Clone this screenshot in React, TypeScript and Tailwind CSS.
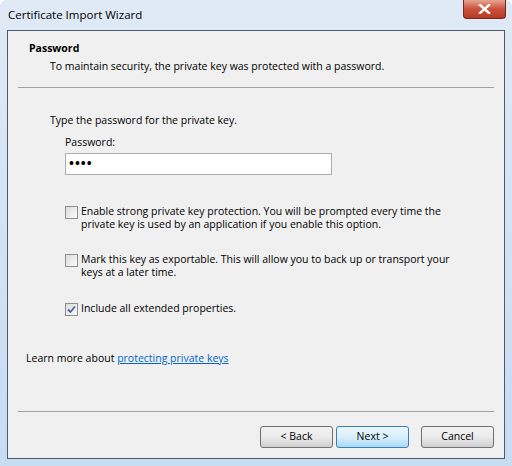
import { FunctionComponent } from 'react';

const font = { fontFamily: '"Open Sans", "Noto Sans", sans-serif' };

const Checkbox: FunctionComponent<{ checked?: boolean }> = ({ checked }) => (
  <span className="mt-[1px] flex h-[13px] w-[13px] shrink-0 items-center justify-center border border-[#8e8f8f] bg-gradient-to-br from-[#dcdcdc] to-[#fbfbfb]">
    {checked && (
      <svg width="9" height="9" viewBox="0 0 9 9" aria-hidden="true">
        <path d="M1 4.5 L3.5 7 L8 1.5" fill="none" stroke="#4a64a0" strokeWidth="1.8" />
      </svg>
    )}
  </span>
);

const Option: FunctionComponent<{ checked?: boolean; lines: string[] }> = ({ checked, lines }) => (
  <div className="flex items-start gap-[3px] pl-[15px]">
    <Checkbox checked={checked} />
    <div className="leading-[13px]">
      {lines.map((l) => (
        <div key={l}>{l}</div>
      ))}
    </div>
  </div>
);

const Button: FunctionComponent<{ label: string; active?: boolean }> = ({ label, active }) => (
  <button
    className={
      active
        ? 'h-[22px] w-[73px] rounded-[3px] border border-[#3c7fb1] bg-gradient-to-b from-[#eaf6fd] via-[#d9f0fc] to-[#a7d9f5] text-[10.5px] text-black'
        : 'h-[22px] w-[73px] rounded-[3px] border border-[#707070] bg-gradient-to-b from-[#f2f2f2] via-[#ebebeb] to-[#cfcfcf] text-[10.5px] text-black'
    }
  >
    {label}
  </button>
);

export default function App() {
  return (
    <div
      className="flex h-[466px] w-[512px] flex-col rounded-t-[6px] bg-gradient-to-b from-[#dfeaf5] to-[#c6dcf1] text-[10.5px] text-black"
      style={font}
    >
      <div className="flex h-[30px] shrink-0 items-start justify-between">
        <span className="pl-[8px] pt-[7px] text-[11.5px] leading-[16px]">Certificate Import Wizard</span>
        <div className="mr-[6px] flex h-[19px] w-[43px] items-center justify-center rounded-b-[4px] border border-t-0 border-[#6b2a22] bg-gradient-to-b from-[#e8a493] via-[#c9503a] to-[#b93a24]">
          <svg width="13" height="10" viewBox="0 0 13 10" aria-hidden="true">
            <path d="M2 1 L11 9 M11 1 L2 9" stroke="#fff" strokeWidth="2.4" strokeLinecap="square" />
          </svg>
        </div>
      </div>

      <div className="mx-[7px] mb-[7px] flex flex-1 flex-col border border-[#4b5a6e] bg-[#f0f0f0]">
        <div className="pt-[10px]">
          <div className="pl-[21px] font-bold leading-[15px]">Password</div>
          <div className="mt-[3px] pl-[42px] leading-[15px]">
            To maintain security, the private key was protected with a password.
          </div>
        </div>
        <div className="mx-[10px] mt-[13px] h-px bg-[#a0a0a0]" />

        <div className="flex flex-col pl-[42px] pt-[25px]">
          <div className="leading-[15px]">Type the password for the private key.</div>
          <div className="mt-[7px] pl-[15px] leading-[15px]">Password:</div>
          <div className="ml-[15px] mt-[3px] flex h-[22px] w-[267px] items-center border border-[#abadb3] bg-white pl-[3px] text-[13px] font-bold tracking-[1px]">
            ••••
          </div>

          <div className="mt-[30px]">
            <Option
              lines={[
                'Enable strong private key protection. You will be prompted every time the',
                'private key is used by an application if you enable this option.',
              ]}
            />
          </div>
          <div className="mt-[22px]">
            <Option
              lines={[
                'Mark this key as exportable. This will allow you to back up or transport your',
                'keys at a later time.',
              ]}
            />
          </div>
          <div className="mt-[23px]">
            <Option checked lines={['Include all extended properties.']} />
          </div>
        </div>

        <div className="mt-[35px] pl-[18px] leading-[15px]">
          Learn more about{' '}
          <span className="text-[#0066cc] underline">protecting private keys</span>
        </div>

        <div className="mx-[10px] mt-[45px] h-px bg-[#a0a0a0]" />

        <div className="flex justify-end pr-[10px] pt-[14px]">
          <Button label="< Back" />
          <div className="ml-[3px]">
            <Button label="Next >" active />
          </div>
          <div className="ml-[12px]">
            <Button label="Cancel" />
          </div>
        </div>
      </div>
    </div>
  );
}
